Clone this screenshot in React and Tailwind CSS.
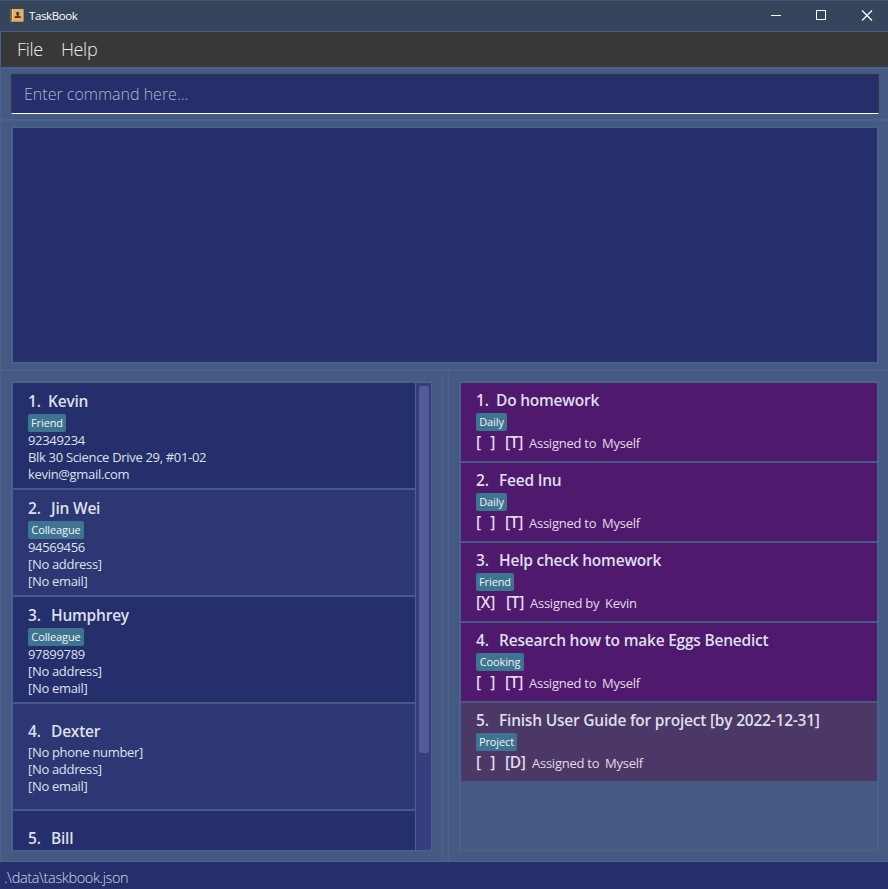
import React from "react";

const people = [
  { name: "Kevin", tag: "Friend", tagWidth: "w-[38px]", lines: ["92349234", "Blk 30 Science Drive 29, #01-02", "kevin@gmail.com"] },
  { name: "Jin Wei", tag: "Colleague", tagWidth: "w-[56px]", lines: ["94569456", "[No address]", "[No email]"] },
  { name: "Humphrey", tag: "Colleague", tagWidth: "w-[56px]", lines: ["97899789", "[No address]", "[No email]"] },
  { name: "Dexter", lines: ["[No phone number]", "[No address]", "[No email]"] },
  { name: "Bill", lines: [] },
];

const tasks = [
  { title: "Do homework", tag: "Daily", tagWidth: "w-[31px]", kind: "[T]", verb: "Assigned to", who: "Myself" },
  { title: "Feed Inu", tag: "Daily", tagWidth: "w-[31px]", kind: "[T]", verb: "Assigned to", who: "Myself" },
  { title: "Help check homework", tag: "Friend", tagWidth: "w-[38px]", done: true, kind: "[T]", verb: "Assigned by", who: "Kevin" },
  { title: "Research how to make Eggs Benedict", tag: "Cooking", tagWidth: "w-[48px]", kind: "[T]", verb: "Assigned to", who: "Myself" },
  { title: "Finish User Guide for project [by 2022-12-31]", tag: "Project", tagWidth: "w-[41px]", kind: "[D]", verb: "Assigned to", who: "Myself", deadline: true },
];

function Tag({ children, width }) {
  return (
    <div className={`flex h-[18px] items-center justify-center rounded-[2px] bg-[#3e7490] text-[11px] tracking-[-0.1px] text-[#f0f4f6] ${width}`}>
      {children}
    </div>
  );
}

function Heading({ index, children }) {
  return (
    <div className="flex h-[22px] items-center text-[15.5px] leading-[22px] font-semibold tracking-[-0.22px] text-[#dedfe9]">
      <span className={index === 1 ? "w-5" : "w-[23px]"}>{index}.</span>
      <span>{children}</span>
    </div>
  );
}

function Person({ person, index }) {
  return (
    <div className={`flex h-[107px] shrink-0 flex-col border-b-2 border-[#465a84] pl-[15px] ${index % 2 ? "bg-[#242f6b]" : "bg-[#2c3773]"} ${person.tag ? "pt-[7px]" : "pt-4"}`}>
      <Heading index={index}>{person.name}</Heading>
      {person.tag ? <div className="pt-0.5"><Tag width={person.tagWidth}>{person.tag}</Tag></div> : <div className="h-0.5" />}
      {person.lines.map((line) => (
        <div key={line} className="h-[17px] text-[13px] leading-[17px] tracking-[-0.32px] text-[#dfe1eb]">{line}</div>
      ))}
    </div>
  );
}

function Task({ task, index }) {
  return (
    <div className={`flex shrink-0 flex-col pt-1.5 pl-[15px] ${task.deadline ? "h-[78px] bg-[#4b3866]" : "h-20 border-b-2 border-[#465a84] bg-[#4f196d]"}`}>
      <Heading index={index}>{task.title}</Heading>
      <div className="pt-0.5"><Tag width={task.tagWidth}>{task.tag}</Tag></div>
      <div className="flex h-[26px] items-center text-[13px] tracking-[-0.25px] text-[#e2dce8]">
        <span className={`flex pb-0.5 text-[15.5px] font-semibold tracking-[-0.3px] ${task.done ? "w-[30px]" : "w-[29px]"}`}>
          {task.done ? <span>[X]</span> : <span className="flex w-[19px] justify-between"><span>[</span><span>]</span></span>}
        </span>
        <span className={`pb-0.5 text-[15.5px] font-semibold tracking-[-0.3px] ${task.kind === "[D]" ? "w-[27px]" : "w-6"}`}>{task.kind}</span>
        <span className={`whitespace-nowrap ${task.done ? "w-[75px]" : "w-[73px]"}`}>{task.verb}</span>
        <span>{task.who}</span>
      </div>
    </div>
  );
}

function TitleBar() {
  return (
    <header className="flex h-[31px] shrink-0 items-center border-t border-[#44566f] bg-[#34455c] pl-2.5">
      <svg width="14" height="14" viewBox="0 0 14 14">
        <rect x="0" y="0" width="14" height="13" rx="1" fill="#80603f" />
        <rect x="2" y="0" width="11.5" height="12" rx="0.5" fill="#e0b066" />
        <rect x="2" y="0" width="1" height="12" fill="#f0cc8b" />
        <path d="M7.7 2.8c1.1 0 1.7.8 1.6 1.700 0 .7-.4 1.200-.8 1.600v.7c.8.2 2.700.5 2.700 2.100H4.300c0-1.600 1.800-1.900 2.600-2.100v-.7c-.5-.4-.8-.9-.8-1.600 0-.9.500-1.700 1.600-1.700Z" fill="#4b3d2d" />
        <rect x="1" y="12" width="12" height="1" fill="#c88b3e" />
      </svg>
      <span className="ml-[5px] flex-1 text-[11.5px] tracking-[-0.4px] text-white">TaskBook</span>
      <svg width="118" height="30" viewBox="0 0 118 30" fill="none" stroke="white" shapeRendering="crispEdges">
        <path d="M1 14.5h10M46.5 9.5h9v9h-9z" />
        <path d="M92 9.5 102 19.5M102 9.5 92 19.5" shapeRendering="auto" strokeWidth="1.2" />
      </svg>
    </header>
  );
}

export default function App() {
  return (
    <div className="flex h-[889px] w-[888px] flex-col overflow-hidden bg-[#455a83] font-['Open_Sans','Noto_Sans',sans-serif]">
      <TitleBar />
      <nav className="flex h-[38px] shrink-0 items-center gap-[18px] border-t border-b-2 border-l border-[#4a5f91] border-b-[#4b608f] bg-[#383838] pl-4 text-[18px] font-light tracking-[-0.3px] text-[#ededed]">
        <span>File</span>
        <span>Help</span>
      </nav>
      <section className="h-[52px] shrink-0 border-b-2 border-l border-[#4c618f] pt-[5px] pr-[9px] pl-2.5">
        <div className="flex h-10 items-center border border-[#383838] border-b-white bg-[#242f6b] pl-3 text-[16px] font-light text-[#b4b7c8]">
          Enter command here...
        </div>
      </section>
      <section className="h-[250px] shrink-0 border-b-2 border-l border-[#4c618f] pt-[5px] pr-[9px] pl-2.5">
        <div className="h-[238px] border-2 border-[#4a608d] bg-[#242f6b]" />
      </section>
      <main className="flex min-h-0 flex-1">
        <section className="w-[443px] border-x border-[#4c618f] pt-2.5 pl-2.5">
          <div className="flex h-[470px] w-[421px] overflow-hidden border border-t-2 border-l-2 border-[#4a608d]">
            <div className="flex w-[402px] flex-col overflow-hidden">
              {people.map((person, i) => <Person key={person.name} person={person} index={i + 1} />)}
            </div>
            <div className="w-4 border-l border-[#4a608d] bg-[#363e7d] pt-[3px] pl-[3px]">
              <div className="h-[367px] w-2.5 rounded-[3px] bg-[#535c99]" />
            </div>
          </div>
        </section>
        <div className="w-[5px]" />
        <section className="flex-1 border-l border-[#4c618f] pt-2.5 pl-2.5">
          <div className="flex h-[470px] w-[420px] flex-col border border-t-2 border-r-2 border-l-2 border-[#4a608d]">
            {tasks.map((task, i) => <Task key={task.title} task={task} index={i + 1} />)}
          </div>
        </section>
      </main>
      <footer className="flex h-7 shrink-0 items-center border-t border-[#4c618f] bg-[#242f6b] pt-1 pl-1 text-[14.5px] leading-5 font-light tracking-[-0.37px] text-[#d5d7e2]">
        .\data\taskbook.json
      </footer>
    </div>
  );
}
